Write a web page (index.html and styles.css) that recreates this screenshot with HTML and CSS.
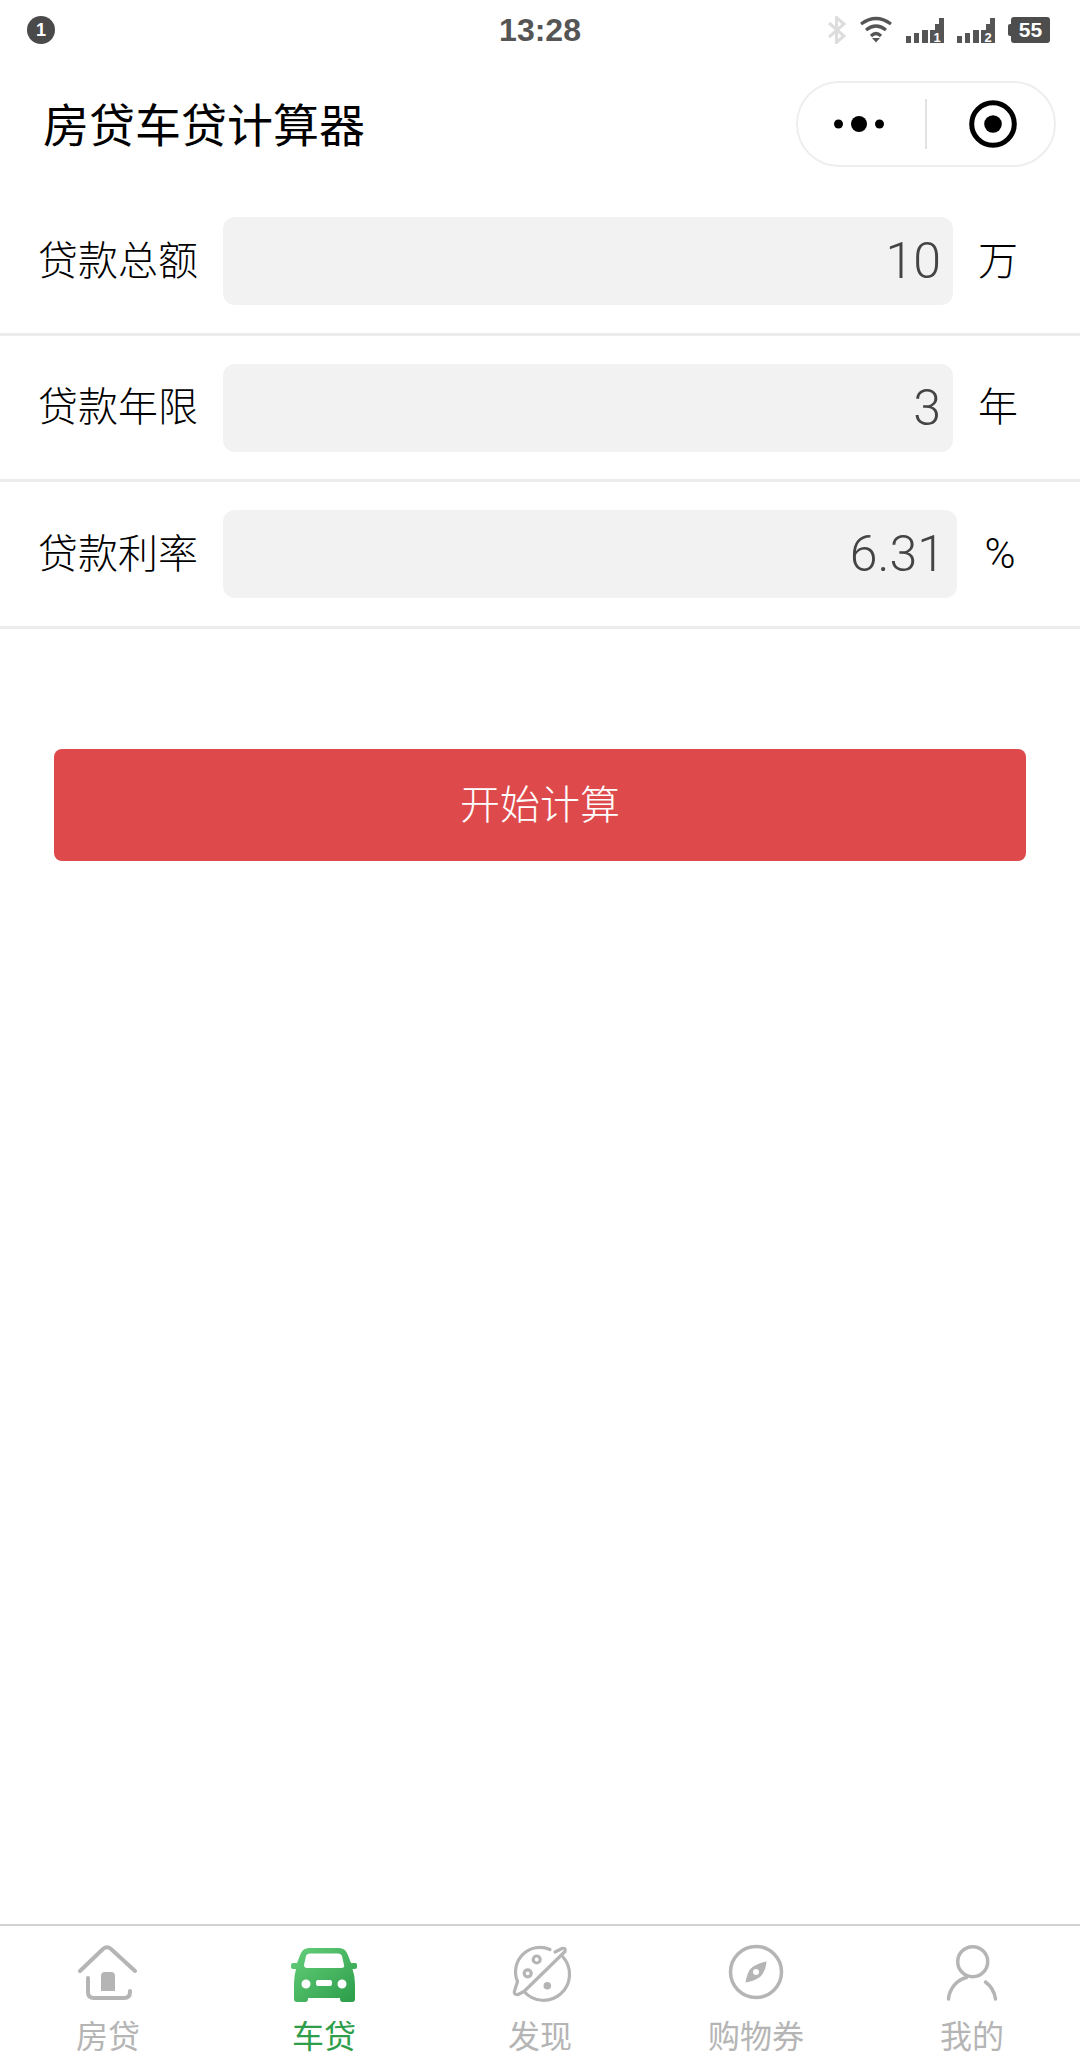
FILE: index.html
```html
<!DOCTYPE html>
<html lang="zh-CN">
<head>
<meta charset="utf-8">
<title>房贷车贷计算器</title>
<link rel="stylesheet" href="styles.css">
</head>
<body>
<div class="page">
  <header class="status">
    <div class="badge">1</div>
    <div class="time">13:28</div>
    <div class="status-icons">
      <svg class="ic-bt" width="19" height="28" viewBox="0 0 19 28"><path d="M2 7 17 20 9.5 26.5V1.5L17 8 2 21" fill="none" stroke="#ddd" stroke-width="3"/></svg>
      <svg class="ic-wifi" width="32" height="28" viewBox="0 0 32 28"><g fill="none" stroke="#555" stroke-width="3.2"><path d="M1 8Q16-3 31 8"/><path d="M6 14Q16 6 26 14"/><path d="M11 20Q16 15 21 20"/></g><path d="M12 22H20L16 26.500Z" fill="#555"/></svg>
      <svg class="ic-sig" width="38" height="25" viewBox="0 0 38 25"><path d="M0 18H5V25H0ZM8 15H13V25H8ZM16 12H22V25H16ZM24 12H29V6H33V0H38V25H24Z" fill="#555"/><text class="sig-num" x="31" y="23.500">1</text></svg>
      <svg class="ic-sig ic-sig-last" width="38" height="25" viewBox="0 0 38 25"><path d="M0 18H5V25H0ZM8 15H13V25H8ZM16 12H22V25H16ZM24 12H29V6H33V0H38V25H24Z" fill="#555"/><text class="sig-num" x="31" y="23.500">2</text></svg>
      <div class="battery">55</div>
    </div>
  </header>

  <nav class="nav">
    <h1 class="title">房贷车贷计算器</h1>
    <div class="capsule">
      <div class="cap-cell cap-left">
        <svg width="50" height="20" viewBox="0 0 50 20"><circle cx="4.500" cy="10" r="4.500"/><circle cx="25" cy="10" r="8"/><circle cx="45.500" cy="10" r="4.500"/></svg>
      </div>
      <div class="cap-cell cap-right">
        <svg width="50" height="50" viewBox="0 0 50 50"><circle cx="25" cy="25" r="21.300" fill="none" stroke="#000" stroke-width="5"/><circle cx="25" cy="25" r="8.800"/></svg>
      </div>
    </div>
  </nav>

  <main class="main">
    <div class="row">
      <div class="label">贷款总额</div>
      <div class="field">10</div>
      <div class="unit">万</div>
    </div>
    <div class="row">
      <div class="label">贷款年限</div>
      <div class="field">3</div>
      <div class="unit">年</div>
    </div>
    <div class="row">
      <div class="label">贷款利率</div>
      <div class="field">6.31</div>
      <div class="unit unit-pct">%</div>
    </div>
    <button class="submit">开始计算</button>
  </main>

  <footer class="tabbar">
    <div class="tab">
      <svg width="70" height="60" viewBox="0 0 70 60"><g transform="translate(5 1)" fill="none" stroke="#b5b5b5" stroke-width="4" stroke-linecap="round" stroke-linejoin="round"><path d="M2 26 25 4Q29 .5 33 4L57 26"/><path d="M10 33V47Q10 53 16 53H46Q52 53 52 47V46"/><path d="M23 46V31Q23 27 27 27H33Q37 27 37 31V46Z" fill="#b5b5b5" stroke="none"/></g></svg>
      <div class="tab-label">房贷</div>
    </div>
    <div class="tab tab-active">
      <svg width="70" height="60" viewBox="0 0 70 60"><defs><linearGradient id="carg" x1="0" y1="0" x2="1" y2="1"><stop offset="0" stop-color="#66d07c"/><stop offset="1" stop-color="#2b9c48"/></linearGradient></defs><g transform="translate(2 4)"><path fill="url(#carg)" fill-rule="evenodd" d="M18 0H48C52 0 55 2 56.500 6L60 15H64.500Q66 15 66 17V19Q66 21 64 21H61.500Q64 28 64 36V51Q64 54 61 54H52Q49 54 49 51V50H17V51Q17 54 14 54H6Q3 54 3 51V36Q3 28 5 21H2Q0 21 0 19V17Q0 15 2 15H6L9.500 6C11 2 14 0 18 0ZM19 5.500C17 5.500 15.500 6.500 15 8L13 17Q13 20 16 20H50Q54 20 53 17L51 8C50.500 6.500 49 5.500 47 5.500ZM15 31.500A4.500 4.500 0 1 0 15 40.500A4.500 4.500 0 1 0 15 31.500ZM51 31.500A4.500 4.500 0 1 0 51 40.500A4.500 4.500 0 1 0 51 31.500ZM27 32Q25 32 25 34V36Q25 38 27 38H39Q41 38 41 36V34Q41 32 39 32Z"/></g></svg>
      <div class="tab-label">车贷</div>
    </div>
    <div class="tab">
      <svg width="70" height="60" viewBox="0 0 70 60"><g fill="none" stroke="#b5b5b5" stroke-width="3.200" stroke-linecap="round" stroke-linejoin="round"><path d="M45 5.500A24.500 24.500 0 0 0 12.500 37.500L9.500 47Q8.500 51 13 50.500L19 47.500 60 7.500Q61 3.500 57 4.500L50 8"/><path d="M58 13A24.500 24.500 0 0 1 19 47.500"/><circle cx="31.700" cy="15.500" r="3.500"/><circle cx="22.700" cy="29.300" r="3.500"/></g><circle cx="42.300" cy="41.700" r="3.800" fill="#b5b5b5"/></svg>
      <div class="tab-label">发现</div>
    </div>
    <div class="tab">
      <svg width="70" height="60" viewBox="0 0 70 60"><circle cx="35" cy="28" r="25.500" fill="none" stroke="#b5b5b5" stroke-width="3.500"/><path fill="#b5b5b5" fill-rule="evenodd" d="M45.500 17.500C38 19 31 22 28 27C26 31 25 35 24.500 38.500C29 38 35 36 39 33C43 29 45 24 45.500 17.500ZM35 25A3 3 0 1 0 35 31A3 3 0 1 0 35 25Z"/></svg>
      <div class="tab-label">购物券</div>
    </div>
    <div class="tab">
      <svg width="70" height="60" viewBox="0 0 70 60"><g fill="none" stroke="#b5b5b5" stroke-width="3.500" stroke-linecap="round"><circle cx="35.700" cy="17.700" r="15"/><path d="M11.500 55C12.500 44 20 36 29.500 33.500"/><path d="M58.500 55C57.500 48 54 42 48.500 38"/></g></svg>
      <div class="tab-label">我的</div>
    </div>
  </footer>
</div>
</body>
</html>
```

FILE: styles.css
```css
* {
  box-sizing: border-box;
}

html,
body {
  margin: 0;
  padding: 0;
  background: #fff;
}

body {
  font-family: "Noto Sans CJK SC", "Liberation Sans", sans-serif;
}

.page {
  width: 1080px;
  height: 2060px;
  display: flex;
  flex-direction: column;
  overflow: hidden;
}

/* status bar */
.status {
  height: 60px;
  flex: none;
  display: grid;
  grid-template-columns: 1fr auto 1fr;
  align-items: center;
  padding: 0 30px 0 27px;
}

.badge {
  width: 28px;
  height: 28px;
  border-radius: 50%;
  background: #4a4a4a;
  color: #fff;
  font: bold 18px/28px "Liberation Sans", sans-serif;
  text-align: center;
}

.time {
  margin-left: 3px;
  font: bold 32px/60px "Liberation Sans", sans-serif;
  color: #555;
}

.status-icons {
  display: flex;
  align-items: center;
  justify-content: flex-end;
  gap: 14px;
}

.ic-sig-last {
  margin-left: -1px;
}

.sig-num {
  font: bold 13px "Liberation Sans", sans-serif;
  fill: #fff;
  text-anchor: middle;
}

.battery {
  position: relative;
  width: 39px;
  height: 26px;
  margin-left: 2px;
  border-radius: 3px;
  background: #4d4d4d;
  color: #fff;
  font: bold 21px/26px "Liberation Sans", sans-serif;
  text-align: center;
}

.battery::before {
  content: "";
  position: absolute;
  left: -3px;
  top: 7px;
  width: 3px;
  height: 12px;
  border-radius: 2px 0 0 2px;
  background: #4d4d4d;
}

/* navigation */
.nav {
  height: 129.6px;
  flex: none;
  display: flex;
  align-items: flex-start;
  justify-content: space-between;
  padding: 21px 24px 0 43px;
}

.title {
  margin: 0;
  font-size: 46px;
  font-weight: 400;
  line-height: 83px;
  color: #000;
}

.capsule {
  width: 260px;
  height: 86px;
  display: flex;
  align-items: center;
  border: 2px solid #eee;
  border-radius: 43px;
  background: #fff;
}

.cap-cell {
  flex: 1;
  height: 50px;
  display: flex;
  align-items: center;
  justify-content: center;
}

.cap-left {
  flex: none;
  width: 129px;
  padding-right: 5px;
  border-right: 2px solid #e2e2e2;
}

.cap-right {
  padding-left: 5px;
}

/* form */
.main {
  flex: 1;
  display: flex;
  flex-direction: column;
}

.row {
  display: flex;
  align-items: center;
  padding: 27.7px 62px 27.7px 38px;
  border-bottom: 3px solid #ececec;
}

.label {
  width: 160px;
  padding-bottom: 7px;
  font-size: 40px;
  font-weight: 300;
  line-height: 56px;
  color: #000;
  white-space: nowrap;
}

.field {
  flex: 1;
  height: 88px;
  margin-left: 25px;
  padding-right: 12px;
  border-radius: 12px;
  background: #f2f2f2;
  color: #444;
  font-family: Roboto, "Liberation Sans", sans-serif;
  font-size: 50px;
  font-weight: 300;
  line-height: 88px;
  text-align: right;
}

.unit {
  width: 40px;
  margin-left: 25px;
  padding-bottom: 7px;
  font-size: 40px;
  font-weight: 300;
  line-height: 56px;
  color: #000;
}

.unit-pct {
  width: 36px;
  padding-bottom: 0;
  font-family: Roboto, "Liberation Sans", sans-serif;
  font-size: 42px;
  font-weight: 300;
  text-align: center;
}

.submit {
  height: 112px;
  margin: 120px 54px 0;
  padding: 0 0 6px;
  border: 0;
  border-radius: 8px;
  background: #de4a4c;
  color: #fff;
  font-family: inherit;
  font-size: 40px;
  font-weight: 300;
}

/* tab bar */
.tabbar {
  height: 136px;
  flex: none;
  display: flex;
  border-top: 2px solid #d2d2d2;
  padding-top: 18px;
}

.tab {
  flex: 1;
  display: flex;
  flex-direction: column;
  align-items: center;
  color: #b5b5b5;
}

.tab-active {
  color: #2f9e4a;
}

.tab-label {
  margin-top: 7px;
  font-size: 32px;
  line-height: 46px;
}
```
